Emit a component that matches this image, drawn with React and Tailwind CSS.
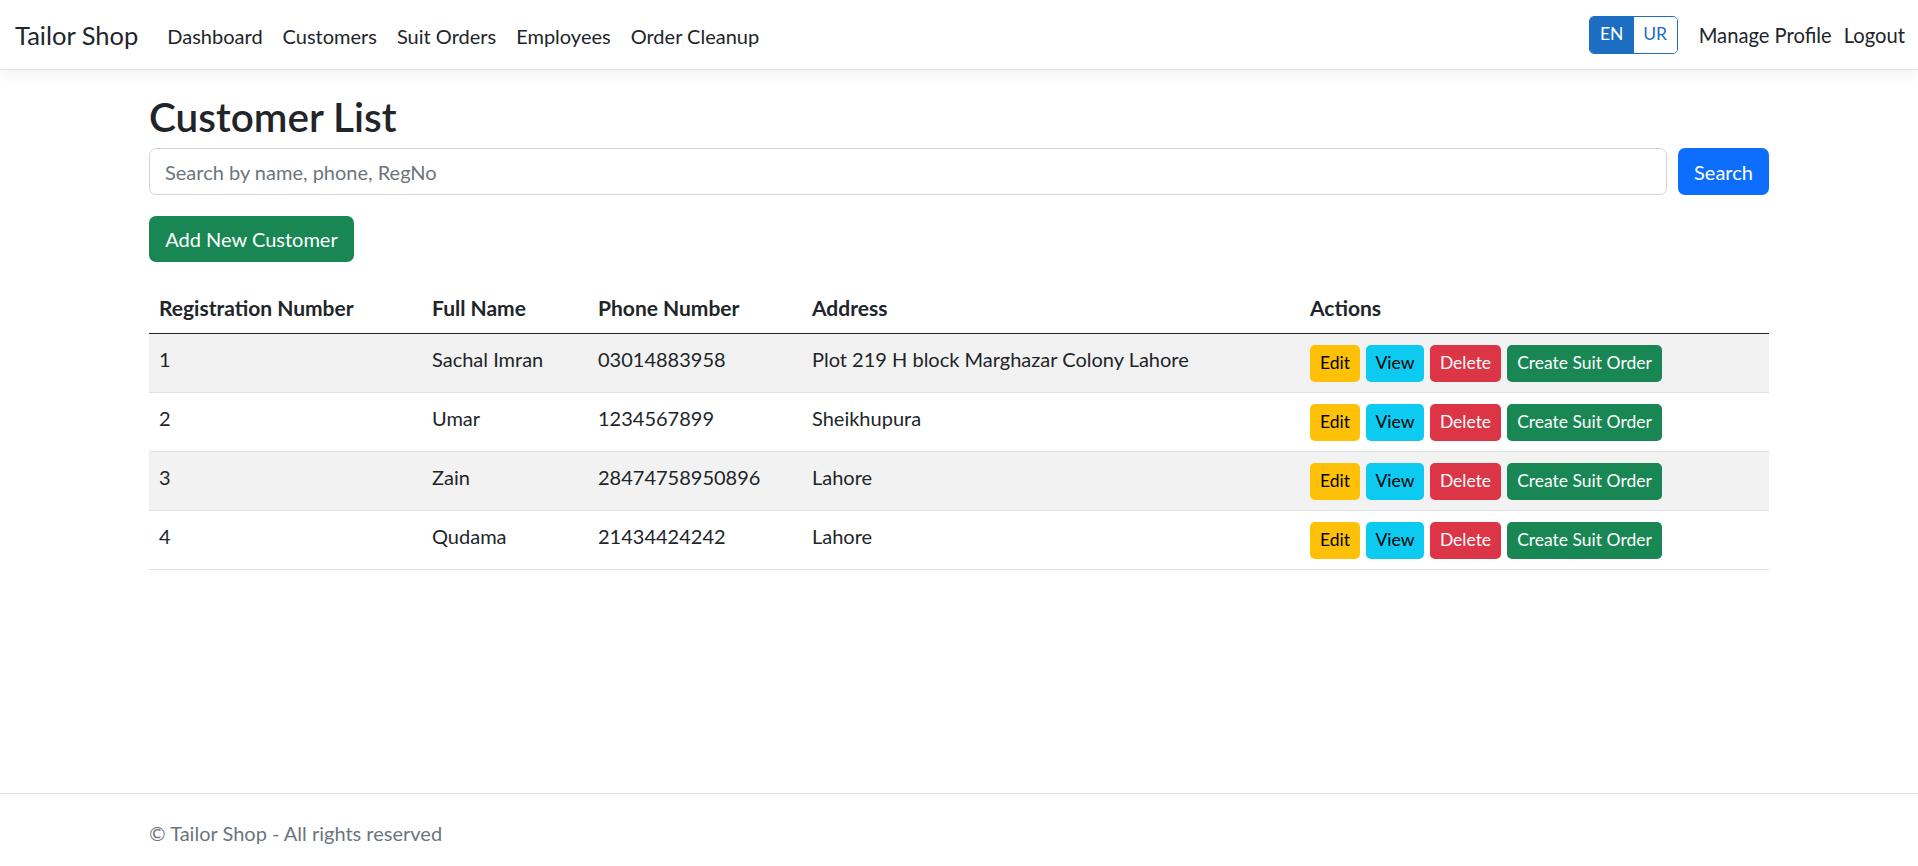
import React from "react";

const customers = [
  { reg: "1", name: "Sachal Imran", phone: "03014883958", address: "Plot 219 H block Marghazar Colony Lahore" },
  { reg: "2", name: "Umar", phone: "1234567899", address: "Sheikhupura" },
  { reg: "3", name: "Zain", phone: "28474758950896", address: "Lahore" },
  { reg: "4", name: "Qudama", phone: "21434424242", address: "Lahore" },
];

function Navbar() {
  return (
    <nav className="h-[70px] pt-[2px] bg-white border-b border-[#dee2e6] shadow-[0_5px_12px_rgba(0,0,0,0.05)] flex items-center justify-between pl-[15px] pr-[13px]">
      <div className="flex items-center">
        <a href="#" className="text-[25.5px] text-[#212529] mr-[19px] leading-none">Tailor Shop</a>
        <ul className="flex items-center text-[20px] text-[#212529]">
          <li><a href="#" className="px-[10px]">Dashboard</a></li>
          <li><a href="#" className="px-[10px]">Customers</a></li>
          <li><a href="#" className="px-[10px]">Suit Orders</a></li>
          <li><a href="#" className="px-[10px]">Employees</a></li>
          <li><a href="#" className="px-[10px]">Order Cleanup</a></li>
        </ul>
      </div>
      <div className="flex items-center text-[20.2px] text-[#212529]">
        {/* Language switch */}
        <div className="flex h-[38px] -mt-[2px] rounded-[5px] border border-[#1b6ec2] overflow-hidden text-[17.5px]">
          <button className="w-[44px] bg-[#1b6ec2] text-white">EN</button>
          <button className="w-[43px] bg-white text-[#1b6ec2]">UR</button>
        </div>
        <a href="#" className="ml-[21px]">Manage Profile</a>
        <a href="#" className="ml-[12px]">Logout</a>
      </div>
    </nav>
  );
}

function ActionButtons() {
  return (
    <div className="flex gap-[6px] text-[17.5px]">
      <button className="w-[50px] h-[37px] rounded-[5px] bg-[#ffc107] text-black">Edit</button>
      <button className="w-[58px] h-[37px] rounded-[5px] bg-[#0dcaf0] text-black">View</button>
      <button className="w-[71px] h-[37px] rounded-[5px] bg-[#dc3545] text-white">Delete</button>
      <button className="w-[155px] h-[37px] rounded-[5px] bg-[#198754] text-white">Create Suit Order</button>
    </div>
  );
}

export default function App() {
  return (
    <div className="min-h-screen flex flex-col bg-white text-[#212529] font-['Lato','Liberation_Sans',sans-serif]">
      <Navbar />

      <main className="w-[1620px] mx-auto pt-[24px] flex-1">
        <h2 className="text-[40.5px] font-semibold leading-[46px] mb-[8px]">Customer List</h2>

        <div className="flex gap-[11px] mb-[21px]">
          <input
            type="text"
            placeholder="Search by name, phone, RegNo"
            className="flex-1 h-[47px] px-[15px] text-[20px] border border-[#ced4da] rounded-[7px] placeholder:text-[#6c757d] outline-none"
          />
          <button className="w-[91px] h-[47px] rounded-[7px] bg-[#0d6efd] text-white text-[20px]">Search</button>
        </div>

        <button className="h-[46px] w-[205px] rounded-[7px] bg-[#198754] text-white text-[20px] mb-[22px]">Add New Customer</button>

        <table className="w-full text-[20px] leading-[28.8px] border-collapse">
          <thead>
            <tr className="text-left border-b border-[#212529]">
              <th className="w-[273px] px-[10px] py-[10px] font-bold text-[21px]">Registration Number</th>
              <th className="w-[166px] px-[10px] py-[10px] font-bold text-[21px]">Full Name</th>
              <th className="w-[214px] px-[10px] py-[10px] font-bold text-[21px]">Phone Number</th>
              <th className="w-[498px] px-[10px] py-[10px] font-bold text-[21px]">Address</th>
              <th className="px-[10px] py-[10px] font-bold text-[21px]">Actions</th>
            </tr>
          </thead>
          <tbody>
            {customers.map((c, i) => (
              <tr key={c.reg} className={`border-b border-[#dee2e6] ${i % 2 === 0 ? "bg-[#f2f2f2]" : "bg-white"}`}>
                <td className="px-[10px] pt-[11px] pb-[10px] align-top">{c.reg}</td>
                <td className="px-[10px] pt-[11px] pb-[10px] align-top">{c.name}</td>
                <td className="px-[10px] pt-[11px] pb-[10px] align-top">{c.phone}</td>
                <td className="px-[10px] pt-[11px] pb-[10px] align-top">{c.address}</td>
                <td className="px-[10px] pt-[11px] pb-[10px] align-top">
                  <ActionButtons />
                </td>
              </tr>
            ))}
          </tbody>
        </table>
      </main>

      {/* Footer */}
      <footer className="border-t border-[#dee2e6] h-[73px] pt-[5px] flex items-center">
        <div className="w-[1620px] mx-auto text-[20px] text-[#6c757d]">© Tailor Shop - All rights reserved</div>
      </footer>
    </div>
  );
}
